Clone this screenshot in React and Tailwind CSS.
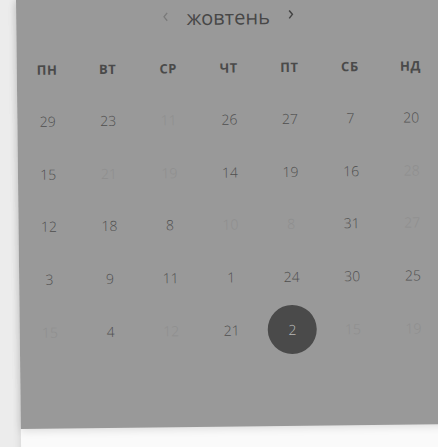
import React from "react";

const rows = [
  [["29"], ["23"], ["11", "f"], ["26"], ["27"], ["7"], ["20"]],
  [["15"], ["21", "f"], ["19", "f"], ["14"], ["19"], ["16"], ["28", "f"]],
  [["12"], ["18"], ["8"], ["10", "f"], ["8", "f"], ["31"], ["27", "f"]],
  [["3"], ["9"], ["11"], ["1"], ["24"], ["30"], ["25"]],
  [["15", "f"], ["4"], ["12", "f"], ["21"], ["2", "s"], ["15", "f"], ["19", "f"]],
];

const days = ["ПН", "ВТ", "СР", "ЧТ", "ПТ", "СБ", "НД"];

export default function App() {
  return (
    <div className="h-[447px] w-[438px] overflow-hidden bg-[#ececec] font-['Open_Sans',sans-serif]">
      <div className="ml-[16px] h-[480px] w-[440px] origin-top-left rotate-[-0.65deg] bg-[#fafafa] shadow-[0_0_8px_rgba(0,0,0,0.12)]">
        <div className="h-[429px] w-full bg-[#999999] shadow-[0_2px_8px_rgba(0,0,0,0.12)]">
          <div className="flex h-[40px] w-[424px] items-center justify-center gap-[17px]">
            <svg width="7" height="11" viewBox="0 0 7 11" className="mt-[-4px]">
              <path d="M5 1.5 L1.8 5.5 L5 9.5" fill="none" stroke="#7a7a7a" strokeWidth="1.3" />
            </svg>
            <span className="text-[20px] leading-none text-[#474747]">жовтень</span>
            <svg width="7" height="11" viewBox="0 0 7 11" className="mt-[-5px]">
              <path d="M2 1.5 L5.2 5.5 L2 9.5" fill="none" stroke="#444" strokeWidth="1.5" />
            </svg>
          </div>
          <div className="mt-[10px] grid h-[42px] w-[424px] grid-cols-7 items-center">
            {days.map((d) => (
              <div key={d} className="text-center text-[13px] font-bold tracking-[0.6px] text-[#4a4a4a]">
                {d}
              </div>
            ))}
          </div>
          <div className="mt-[3px] w-[424px]">
            {rows.map((r, i) => (
              <div key={i} className="grid h-[52.75px] grid-cols-7 items-center">
                {r.map(([n, t], j) => (
                  <div key={j} className="flex items-center justify-center">
                    {t === "s" ? (
                      <div className="flex h-[49px] w-[49px] items-center justify-center rounded-full bg-[#4a4a4a] text-[14px] font-light text-[#b8b8b8]">
                        {n}
                      </div>
                    ) : (
                      <span
                        className={
                          t === "f"
                            ? "text-[14px] font-light text-[#8e8e8e]"
                            : "text-[14px] font-light text-[#4f4f4f]"
                        }
                      >
                        {n}
                      </span>
                    )}
                  </div>
                ))}
              </div>
            ))}
          </div>
        </div>
      </div>
    </div>
  );
}
